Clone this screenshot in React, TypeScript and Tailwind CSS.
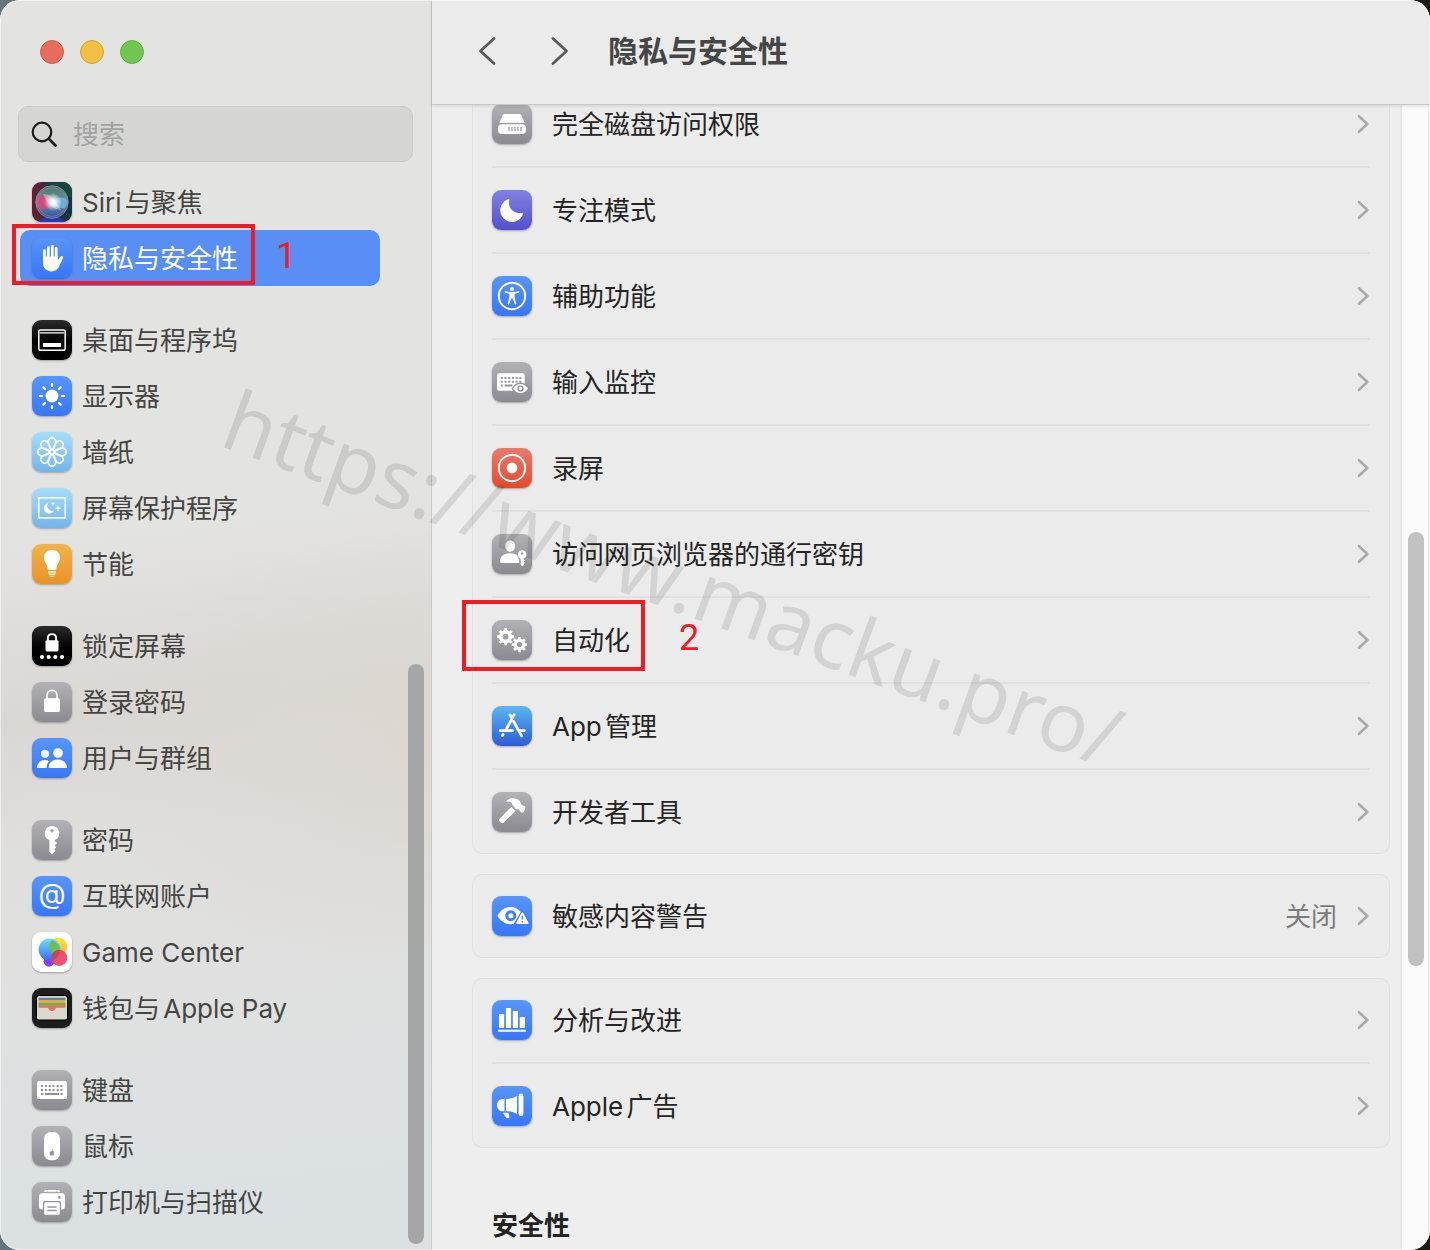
import type { ReactNode } from "react";

type Tone = "blue" | "gray" | "black" | "sky" | "orange" | "red" | "indigo" | "white" | "siri" | "wallet" | "store";

const tones: Record<Tone, string> = {
  blue: "bg-linear-to-b from-[#5795fa] to-[#3876f8]",
  gray: "bg-linear-to-b from-[#b2b1b6] to-[#8b8a90]",
  black: "bg-linear-to-b from-[#2c2c2c] via-[#050505] via-50% to-black",
  sky: "bg-linear-to-b from-[#a6defa] to-[#74b4ea]",
  orange: "bg-linear-to-b from-[#efb44b] to-[#ea9226]",
  red: "bg-linear-to-b from-[#e67a6c] to-[#e2482c]",
  indigo: "bg-linear-to-b from-[#8480e0] to-[#5350cc]",
  white: "bg-white",
  siri: "bg-linear-to-r from-[#6b1832] via-[#2b2a45] to-[#143243]",
  wallet: "bg-[#1d1d1d]",
  store: "bg-linear-to-b from-[#5fb4ee] to-[#2f5bd6]",
};

function Tile({ tone, children }: { tone: Tone; children: ReactNode }) {
  return (
    <span
      className={`flex size-10 shrink-0 items-center justify-center overflow-hidden rounded-[9px] text-white shadow-[0_1px_2px_rgba(0,0,0,0.3)] ${tones[tone]}`}
    >
      {children}
    </span>
  );
}

function Glyph({ children }: { children: ReactNode }) {
  return (
    <svg viewBox="0 0 40 40" className="size-10" fill="currentColor" aria-hidden="true">
      {children}
    </svg>
  );
}

const line = { fill: "none", stroke: "currentColor", strokeLinecap: "round", strokeLinejoin: "round" } as const;
const eighths = [0, 45, 90, 135, 180, 225, 270, 315];

function Gear({ x, y, r }: { x: number; y: number; r: number }) {
  return (
    <g transform={`translate(${x} ${y})`} {...line} strokeLinecap="butt">
      <circle r={r * 0.56} strokeWidth={r * 0.44} />
      {eighths.map((a) => (
        <path key={a} d={`M0 ${-r * 0.7}V${-r}`} strokeWidth={r * 0.34} transform={`rotate(${a})`} />
      ))}
    </g>
  );
}

const icons = {
  siri: (
    <Glyph>
      <defs>
        <radialGradient id="orbGlow">
          <stop offset="0" stopColor="#fff" />
          <stop offset="0.3" stopColor="#fff" stopOpacity="0.85" />
          <stop offset="1" stopColor="#fff" stopOpacity="0" />
        </radialGradient>
        <linearGradient id="orbBack" x2="0" y2="1">
          <stop stopColor="#3f7f6a" />
          <stop offset="0.5" stopColor="#6f8a9c" />
          <stop offset="1" stopColor="#2b55a8" />
        </linearGradient>
      </defs>
      <path d="M14 0h26v16Z" fill="#174a3c" opacity="0.8" />
      <path d="M6 40c6-8 20-8 28 0Z" fill="#2a3cc0" opacity="0.8" />
      <circle cx="20" cy="20" r="16" fill="url(#orbBack)" />
      <path d="M4.500 18c3-6 10-7 15.500 2-3 8-9 9-14 6Z" fill="#e0417a" opacity="0.85" />
      <path d="M20 20c5-5 11-6 15.500-2 .5 4-1 6-3 8-6 1-10-2-12.500-6Z" fill="#63bdf0" opacity="0.8" />
      <path d="M11 12c7 0 11 3 18 16-8-1-14-6-18-16Z" fill="#f3d3e4" opacity="0.45" />
      <circle cx="21" cy="20" r="9" fill="url(#orbGlow)" />
      <circle cx="20" cy="20" r="16.300" fill="none" stroke="#8fae9f" strokeWidth="0.900" opacity="0.8" />
      <circle cx="20" cy="20" r="14.400" fill="none" stroke="#cf7fa4" strokeWidth="0.700" opacity="0.7" />
    </Glyph>
  ),
  hand: (
    <Glyph>
      <path d="M11 18.500V25c0 5.200 3.900 8.400 8.600 8.400 4 0 6.300-1.800 7.800-5.300l3.700-8.300c.6-1.700-1.600-2.700-2.700-1.100L26 22h-.4v-3.500Z" />
      <path {...line} strokeWidth="2.700" d="M12.400 22V12.700M16.300 20V9.500M20.300 20V8.300M24.200 21V10.200" />
    </Glyph>
  ),
  dock: (
    <Glyph>
      <rect x="6.800" y="10" width="26.400" height="20.300" rx="1.800" {...line} strokeWidth="1.500" />
      <path d="M8 12.200h24v1.400H8zM11 23h18v4H11z" />
    </Glyph>
  ),
  sun: (
    <Glyph>
      <circle cx="20" cy="20" r="6.400" />
      {eighths.map((a) => (
        <path key={a} {...line} strokeWidth="2.200" d="M20 10V7.800" transform={`rotate(${a} 20 20)`} />
      ))}
    </Glyph>
  ),
  flower: (
    <Glyph>
      {eighths.map((a) => (
        <path
          key={a}
          {...line}
          strokeWidth="1.700"
          d="M20 20C19 16 16.200 13.500 16.200 9.700a3.800 3.800 0 0 1 7.600 0C23.800 13.500 21 16 20 20Z"
          transform={`rotate(${a} 20 20)`}
        />
      ))}
      <circle cx="20" cy="20" r="2" fill="#8cc8f0" stroke="currentColor" strokeWidth="1.200" />
    </Glyph>
  ),
  saver: (
    <Glyph>
      <rect x="6.800" y="9.900" width="26.400" height="20" {...line} strokeLinejoin="miter" strokeWidth="1.500" />
      <path d="M16 15.200a5.300 5.300 0 1 0 6 7.300 5 5 0 0 1-6-7.300Z" />
      <path d="m21 13.400.6 1.600 1.600.6-1.600.6-.6 1.600-.6-1.600-1.600-.6 1.600-.6ZM26 17l.9 2.300 2.300.9-2.300.9-.9 2.300-.9-2.300-2.300-.9 2.300-.9Z" />
    </Glyph>
  ),
  bulb: (
    <Glyph>
      <path d="M20 6c-4.700 0-8 3.300-8 7.600 0 4.700 3.300 6.200 3.900 12.400h8.200c.6-6.200 3.900-7.700 3.900-12.400C28 9.300 24.700 6 20 6Z" />
      <path d="M16 27.200h8v1.500h-8zM16.300 29.600h7.400l-.6 1.400h-6.200zM17.500 31.800h5c-.5.900-1.400 1.300-2.500 1.300s-2-.4-2.500-1.300Z" opacity="0.85" />
    </Glyph>
  ),
  lockDots: (
    <Glyph>
      <path {...line} strokeWidth="1.900" d="M15.900 15v-3c0-5.200 8.200-5.200 8.200 0v3" />
      <rect x="13.500" y="14.200" width="13" height="11.200" rx="1.400" />
      {[10, 16.7, 23.3, 30].map((x) => (
        <circle key={x} cx={x} cy="31" r="2.100" />
      ))}
    </Glyph>
  ),
  lock: (
    <Glyph>
      <path {...line} strokeWidth="1.700" d="M15 17v-3.500c0-6.900 10-6.900 10 0V17" />
      <rect x="12" y="16.200" width="16" height="13.800" rx="1.600" />
    </Glyph>
  ),
  users: (
    <Glyph>
      <circle cx="13" cy="15.700" r="4" />
      <circle cx="26" cy="15" r="4.800" />
      <path d="M5 29.900c0-4.600 3.500-7.900 8-7.900 1.600 0 3 .4 4.200 1.200-1.700 1.700-2.500 3.800-2.500 6.700Z" />
      <path d="M16.600 29.900c0-5 4-8.400 9.200-8.400s9.200 3.400 9.200 8.400Z" />
    </Glyph>
  ),
  key: (
    <Glyph>
      <path
        fillRule="evenodd"
        d="M20 6a7.200 7.200 0 0 1 2.600 13.900v1.200l2.600 2-2.600 2.300 1.500 2-1.500 1.700.6 1.900-3.200 3.500-2.600-2.700V19.900A7.200 7.200 0 0 1 20 6Zm0 3a1.800 1.800 0 1 0 0 3.600A1.800 1.800 0 0 0 20 9Z"
      />
    </Glyph>
  ),
  at: (
    <span aria-hidden="true" className="pb-1 text-[28px] leading-none">
      @
    </span>
  ),
  game: (
    <Glyph>
      <defs>
        <linearGradient id="gcBlue" x2="0" y2="1">
          <stop stopColor="#72e0f7" />
          <stop offset="1" stopColor="#3a6cf0" />
        </linearGradient>
        <linearGradient id="gcYellow" x2="0" y2="1">
          <stop stopColor="#fbe93d" />
          <stop offset="1" stopColor="#f5ad32" />
        </linearGradient>
      </defs>
      <circle cx="17" cy="29.300" r="5.400" fill="#8b3bf2" />
      <circle cx="26.300" cy="14.500" r="8.900" fill="url(#gcYellow)" />
      <circle cx="17.500" cy="17.500" r="10.900" fill="url(#gcBlue)" />
      <path d="M20 8.300a8.900 8.900 0 0 0 5.800 15.100A10.900 10.900 0 0 0 20 7.900Z" fill="#6cc04f" />
      <circle cx="27.300" cy="25.900" r="8" fill="#ec4567" opacity="0.93" />
      <path d="M20 22.600a8 8 0 0 1 8.300-4.600 11 11 0 0 1-8.600 10.200 8 8 0 0 1 .3-5.600Z" fill="#c0485c" />
    </Glyph>
  ),
  wallet: (
    <Glyph>
      <rect x="3.800" y="7" width="32.400" height="25.600" rx="3" fill="#000" />
      <rect x="5" y="8" width="30" height="23.500" rx="2.200" fill="#dad7cb" />
      <path d="M6.500 9.700h27V12h-27z" fill="#4f87bf" />
      <path d="M6.500 12h27v2.800h-27z" fill="#e5a93c" />
      <path d="M6.500 14.800h27v2.800h-27z" fill="#70ad46" />
      <path d="M6.500 17.200h27v2.600h-8.200c-1 0-1.500.5-2 1.200-1.500 2.800-5.100 2.800-6.600 0-.5-.7-1-1.200-2-1.200H6.500Z" fill="#dd7363" />
    </Glyph>
  ),
  keyboard: (
    <Glyph>
      <rect x="5" y="11" width="30" height="18" rx="2" />
      <g stroke="#929197" strokeWidth="2" fill="none">
        <path d="M9 15.900h23M9 19.900h23" strokeDasharray="2 1.900" />
        <path d="M9 23.900h2.200M13 23.900h14M28.500 23.900h2.200" />
      </g>
    </Glyph>
  ),
  mouse: (
    <Glyph>
      <rect x="12" y="6" width="16" height="28.200" rx="6.500" />
      <path
        d="M19.800 25.300c-2.800-1-2.600 4.200-.6 4.200l.8-.2.800.2c.8 0 1.500-1.200 1.500-1.800-.9-.5-.8-1.600 0-2-.7-.9-1.500-.6-2.500-.4Zm.2-.6c0-1 .5-1.500 1.200-1.600 0 .9-.4 1.500-1.200 1.600Z"
        fill="#919096"
      />
    </Glyph>
  ),
  printer: (
    <Glyph>
      <path d="M12 9.700c.2-1.200 1-1.700 2-1.700h12c1 0 1.800.5 2 1.700Z" />
      <rect x="7" y="11.300" width="26" height="16.200" rx="3.200" />
      <circle cx="27.300" cy="15.500" r="1.400" fill="#a2a1a7" />
      <rect x="10.900" y="19" width="18.200" height="15.500" rx="2" fill="#96959b" />
      <rect x="12.200" y="20.300" width="15.600" height="12.500" rx="1.500" />
      <path {...line} stroke="#96959b" strokeWidth="1.300" d="M16 25h8M16 28.500h8" />
    </Glyph>
  ),
  disk: (
    <Glyph>
      <path d="M12.800 10h14.400c1.300 0 2 .6 2.400 1.700l3.100 7.100H7.300l3.100-7.100c.4-1.100 1.100-1.700 2.400-1.700Z" />
      <rect x="6" y="20.300" width="28" height="9.700" rx="4" />
      <path d="M17 23v4.300M20 23v4.300M23 23v4.300M26 23v4.300M29 23v4.300" stroke="#97969c" strokeWidth="1.200" />
    </Glyph>
  ),
  moon: (
    <Glyph>
      <path d="M16.500 9.100c.7-.3 1 .1.800.7-2.300 8 4.800 15 13.200 13 .7-.2 1 .2.700.8A11.700 11.700 0 1 1 16.500 9.100Z" />
    </Glyph>
  ),
  body: (
    <Glyph>
      <circle cx="20" cy="20" r="13.200" {...line} strokeWidth="1.900" />
      <circle cx="20" cy="12.900" r="2" />
      <path d="M13.300 15.300 18 16h4l4.700-.7c.9 0 .9 1.200.1 1.400l-4.100 1c-.4 2.400.2 5 1.500 9.800.1 1-1 1.300-1.400.4L20.300 22h-.6l-2.500 5.900c-.4.900-1.500.6-1.400-.4 1.300-4.800 1.900-7.400 1.500-9.800l-4.100-1c-.8-.2-.8-1.400.1-1.400Z" />
    </Glyph>
  ),
  keyboardEye: (
    <Glyph>
      <rect x="5" y="11.300" width="27.700" height="17.400" rx="2" />
      <g stroke="#96959b" strokeWidth="1.900" fill="none">
        <path d="M8.800 16h21M8.800 19.700h21" strokeDasharray="2 1.700" />
        <path d="M8.800 23.500h2M12.500 23.500h8" />
      </g>
      <path d="M19.600 26.500c2.200-4 5.300-6 8.900-6s6.700 2 8.900 6c-2.200 4-5.300 6-8.900 6s-6.700-2-8.900-6Z" fill="#929197" />
      <path d="M21 26.500c1.900-3 4.400-4.500 7.500-4.500s5.600 1.500 7.500 4.500c-1.900 3-4.400 4.500-7.500 4.500S22.900 29.500 21 26.500Z" />
      <circle cx="28.500" cy="26.500" r="2.400" fill="none" stroke="#8f8e94" strokeWidth="1.400" />
    </Glyph>
  ),
  record: (
    <Glyph>
      <circle cx="20" cy="20" r="13.200" {...line} strokeWidth="1.900" />
      <circle cx="20" cy="20" r="5.400" />
    </Glyph>
  ),
  personKey: (
    <Glyph>
      <ellipse cx="18.200" cy="12" rx="5" ry="5.700" />
      <path d="M8 27c0-4.800 4.400-7.700 10.200-7.700 3 0 5.500.7 7.300 2.200.1 1.500.7 2.700 1.700 3.700V29H9.500C8.400 29 8 28.300 8 27Z" />
      <path
        fillRule="evenodd"
        d="M30.200 16.300a4.200 4.200 0 0 1 1.500 8.100v.9l1.400 1.100-1.300 1.300 1 1.100-1 1.100.3.900-1.900 1.500-1.500-1.500v-6.400a4.200 4.200 0 0 1 1.500-8.100Zm0 1.900a1.200 1.200 0 1 0 0 2.400 1.200 1.200 0 0 0 0-2.400Z"
      />
    </Glyph>
  ),
  gears: (
    <Glyph>
      <Gear x={13.6} y={16.7} r={8.5} />
      <Gear x={27.4} y={24.6} r={7.6} />
    </Glyph>
  ),
  store: (
    <Glyph>
      <path
        {...line}
        strokeWidth="2.700"
        d="M22.200 8.700 14.700 22.500M18 9l1.500 2.500M8.300 24.700h12.200M26.500 24.700h5.800M21.600 15.500 29.700 30M11 28.500l-.7 1.200"
      />
    </Glyph>
  ),
  hammer: (
    <Glyph>
      <path d="M14.200 9.200C17.500 5.500 24 5.300 27.800 9l1.600 3.500 1.700 1.400c.9-.4 1.600-.3 2.200.7.300 2-.7 4.500-2.300 6-1 .6-1.900-.1-2.800-1.400l-1.100-1.800-3.200-.4-3.400-3.800c-.4-2.400-1.800-3.800-6-3.600-.7 0-.7-.1-.3-.4Z" />
      <path d="M19.400 14.900 23.500 19 12 30.200c-1.600 1.600-2.800 1.200-4-.1-1.200-1.300-1.300-2.600.1-4Z" />
    </Glyph>
  ),
  eyeAlert: (
    <Glyph>
      <path d="M5.500 19.700C8.800 13.900 13.300 11 18.500 11s9.700 2.900 13 8.700c-3.300 5.700-7.800 8.500-13 8.500s-9.700-2.800-13-8.500Z" />
      <circle cx="18.800" cy="19.700" r="4" fill="none" stroke="#447ff8" strokeWidth="3" />
      <path d="m30.300 15-8 14h16Z" fill="#447ff8" stroke="#447ff8" strokeWidth="2" strokeLinejoin="round" />
      <path d="M30.300 17.300 25.300 27h10.200Z" stroke="currentColor" strokeWidth="2" strokeLinejoin="round" />
      <path d="M30.300 19.800v3.700M30.300 25v1.400" stroke="#447ff8" strokeWidth="1.300" />
    </Glyph>
  ),
  chart: (
    <Glyph>
      <rect x="7" y="14" width="5.200" height="14" rx="0.800" />
      <rect x="13.900" y="8" width="5.200" height="20" rx="0.800" />
      <rect x="20.800" y="11" width="5.200" height="17" rx="0.800" />
      <rect x="27.700" y="17" width="5.200" height="11" rx="0.800" />
      <rect x="6" y="29.800" width="28" height="2" rx="0.600" />
    </Glyph>
  ),
  megaphone: (
    <Glyph>
      <path d="M12.500 13v12.200h-1.800c-3.300 0-5.700-2.600-5.700-6s2.400-6.200 5.700-6.200ZM14 13c4.500-.2 7.700-1 11-3v18c-3.300-1.900-6.500-2.700-11-2.800ZM11 26.700h5.500l.8 3.400c.3 1.300-.5 2.100-1.600 2.100-.9 0-1.400-.3-1.900-1Z" />
      <rect x="26.600" y="7.500" width="4.800" height="22.600" rx="2.400" />
    </Glyph>
  ),
};

type Item = { label: string; tone: Tone; icon: keyof typeof icons; value?: string; step?: number };

const sidebar: Item[][] = [
  [
    { label: "Siri与聚焦", tone: "siri", icon: "siri" },
    { label: "隐私与安全性", tone: "blue", icon: "hand", step: 1 },
  ],
  [
    { label: "桌面与程序坞", tone: "black", icon: "dock" },
    { label: "显示器", tone: "blue", icon: "sun" },
    { label: "墙纸", tone: "sky", icon: "flower" },
    { label: "屏幕保护程序", tone: "sky", icon: "saver" },
    { label: "节能", tone: "orange", icon: "bulb" },
  ],
  [
    { label: "锁定屏幕", tone: "black", icon: "lockDots" },
    { label: "登录密码", tone: "gray", icon: "lock" },
    { label: "用户与群组", tone: "blue", icon: "users" },
  ],
  [
    { label: "密码", tone: "gray", icon: "key" },
    { label: "互联网账户", tone: "blue", icon: "at" },
    { label: "Game Center", tone: "white", icon: "game" },
    { label: "钱包与Apple Pay", tone: "wallet", icon: "wallet" },
  ],
  [
    { label: "键盘", tone: "gray", icon: "keyboard" },
    { label: "鼠标", tone: "gray", icon: "mouse" },
    { label: "打印机与扫描仪", tone: "gray", icon: "printer" },
  ],
];

const cards: Item[][] = [
  [
    { label: "完全磁盘访问权限", tone: "gray", icon: "disk" },
    { label: "专注模式", tone: "indigo", icon: "moon" },
    { label: "辅助功能", tone: "blue", icon: "body" },
    { label: "输入监控", tone: "gray", icon: "keyboardEye" },
    { label: "录屏", tone: "red", icon: "record" },
    { label: "访问网页浏览器的通行密钥", tone: "gray", icon: "personKey" },
    { label: "自动化", tone: "gray", icon: "gears", step: 2 },
    { label: "App管理", tone: "store", icon: "store" },
    { label: "开发者工具", tone: "gray", icon: "hammer" },
  ],
  [{ label: "敏感内容警告", tone: "blue", icon: "eyeAlert", value: "关闭" }],
  [
    { label: "分析与改进", tone: "blue", icon: "chart" },
    { label: "Apple广告", tone: "blue", icon: "megaphone" },
  ],
];

function Sidebar() {
  return (
    <aside className="relative flex w-[432px] shrink-0 flex-col border-r border-[#c9c9c8] bg-[radial-gradient(ellipse_360px_220px_at_100%_60%,#dcd7d1,transparent),linear-gradient(174deg,#e3e3e1_42%,#dad7d3_56%,#dfdfde_66%,#e0e0e0_78%,#dbe1e2_94%)]">
      <div className="flex gap-4 px-10 pt-10">
        <button aria-label="关闭窗口" className="size-6 rounded-full border border-[#d65a4c] bg-[#e66d5e]" />
        <button aria-label="最小化" className="size-6 rounded-full border border-[#d9a63c] bg-[#f2c044]" />
        <button aria-label="缩放" className="size-6 rounded-full border border-[#5cb33f] bg-[#70c650]" />
      </div>

      <label className="mx-[18px] mt-[42px] flex h-14 items-center gap-4 rounded-[10px] border border-[#cbcbca] bg-[#d5d5d3] px-3">
        <svg viewBox="0 0 26 26" className="size-[26px] shrink-0 text-[#1c1c1c]" {...line}>
          <circle cx="11" cy="11" r="9.300" strokeWidth="2.200" />
          <path d="m18 18 6.500 6.500" strokeWidth="2.800" />
        </svg>
        <input
          type="text"
          aria-label="搜索"
          placeholder="搜索"
          className="w-full min-w-0 bg-transparent text-[26px] outline-none placeholder:text-[#a3a3a2]"
        />
      </label>

      <nav className="mt-3 flex flex-col gap-[26px] pr-[51px] pl-5">
        {sidebar.map((group) => (
          <ul key={group[0].label}>
            {group.map((item) => (
              <li key={item.label} className="relative">
                <a
                  href="#"
                  className={`flex h-14 items-center gap-[10px] rounded-[10px] px-3 text-[26px] whitespace-nowrap ${
                    item.step ? "bg-[#598ff5] text-white" : "text-[#454543]"
                  }`}
                >
                  <Tile tone={item.tone}>{icons[item.icon]}</Tile>
                  {item.label}
                </a>
                {item.step && (
                  <>
                    <span className="absolute -top-1.5 -left-2 h-[61px] w-[243px] border-4 border-[#ee1c25]" />
                    <span className="absolute top-1.5 left-64 font-[Roboto,sans-serif] text-4xl text-[#ee1c25]">{item.step}</span>
                  </>
                )}
              </li>
            ))}
          </ul>
        ))}
      </nav>

      {/* scroll thumb */}
      <div className="absolute right-[7px] bottom-1.5 h-[580px] w-4 rounded-full bg-[#a5a6a6]" />
    </aside>
  );
}

function Row({ item, last }: { item: Item; last: boolean }) {
  return (
    <li className={`relative ${last ? "" : "border-b-2 border-[#e0e0e0]"}`}>
      <button className="flex h-21 w-full items-center gap-5 text-left text-[26px] text-[#242424]">
        <Tile tone={item.tone}>{icons[item.icon]}</Tile>
        <span className="flex-1">{item.label}</span>
        {item.value && <span className="text-[#7c7c7c]">{item.value}</span>}
        <svg viewBox="0 0 13 20" className="h-5 w-[13px] text-[#a9a9a9]" {...line} strokeWidth="2.600">
          <path d="m2 2.200 8.300 7.800L2 17.800" />
        </svg>
      </button>
      {item.step && (
        <>
          <span className="absolute top-0.5 -left-[30px] h-[71px] w-[183px] border-4 border-[#ee1c25]" />
          <span className="absolute top-5 left-[187px] font-[Roboto,sans-serif] text-4xl text-[#ee1c25]">{item.step}</span>
        </>
      )}
    </li>
  );
}

export default function App() {
  return (
    <div className="h-screen bg-linear-to-r from-[#66757c] to-[#1b1c16]">
      <div className="relative flex h-full overflow-hidden rounded-[20px] bg-[#eeeeee] font-[Inter,'Noto_Sans_CJK_SC',sans-serif] [text-autospace:normal]">
        <Sidebar />

        <main className="flex min-w-0 flex-1 flex-col">
          <header className="z-10 flex h-[105px] shrink-0 items-center border-b border-[#c8c8c8] bg-[#ebebeb] pb-0.5 pl-[46px] text-[#5a5a5a] shadow-[0_1px_3px_rgba(0,0,0,0.12)]">
            <button aria-label="后退">
              <svg viewBox="0 0 18 30" className="h-[30px] w-[18px]" {...line} strokeWidth="2.800">
                <path d="M16 2.500 2.500 15 16 27.500" />
              </svg>
            </button>
            <button aria-label="前进" className="ml-[55px]">
              <svg viewBox="0 0 18 30" className="h-[30px] w-[18px]" {...line} strokeWidth="2.800">
                <path d="M2 2.500 15.500 15 2 27.500" />
              </svg>
            </button>
            <h1 className="ml-[39px] text-[30px] font-bold text-[#464646]">隐私与安全性</h1>
          </header>

          <div className="flex min-h-0 flex-1">
            <div className="min-w-0 flex-1 overflow-hidden pr-[10px] pl-10">
              {/* the list is scrolled so that the first row sits half under the toolbar */}
              <div className="-mt-[23px] flex flex-col gap-5">
                {cards.map((card) => (
                  <ul key={card[0].label} className="rounded-[10px] bg-[#ebebeb] px-5 inset-ring inset-ring-[#e0e0e0]">
                    {card.map((item, i) => (
                      <Row key={item.label} item={item} last={i === card.length - 1} />
                    ))}
                  </ul>
                ))}
              </div>
              <h2 className="mt-[58px] px-5 text-[26px] font-bold text-[#242424]">安全性</h2>
            </div>

            <div className="w-[30px] shrink-0 border-r-2 border-l-2 border-[#e8e8e8] bg-[#fafafa] px-1.5">
              <div className="mt-[427px] h-[434px] w-4 rounded-full bg-[#c2c2c2]" />
            </div>
          </div>
        </main>

        <div
          aria-hidden="true"
          className="pointer-events-none absolute top-[535px] left-[200px] z-20 rotate-20 font-['Noto_Sans',sans-serif] text-[83px] leading-none whitespace-nowrap text-black/10"
        >
          https://www.macku.pro/
        </div>

        {/* light rim of the window */}
        <div className="pointer-events-none absolute inset-0 z-30 rounded-[20px] inset-ring inset-ring-white/50" />
      </div>
    </div>
  );
}
